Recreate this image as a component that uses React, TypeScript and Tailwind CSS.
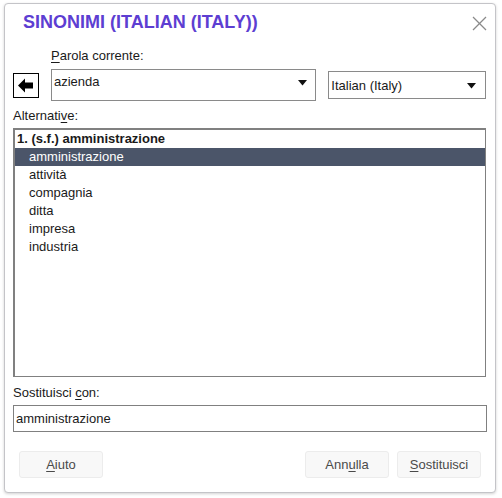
import React from "react";

const Tri = () => (
  <svg width="9" height="6" viewBox="0 0 9 6" className="shrink-0">
    <polygon points="0,0 9,0 4.5,5.5" fill="#111" />
  </svg>
);

export default function App() {
  const items = ["attività", "compagnia", "ditta", "impresa", "industria"];
  return (
    <div
      className="w-[502px] h-[498px] bg-white pt-[3px] pl-[4px] text-[13px] text-[#1a1a1a]"
      style={{ fontFamily: '"Liberation Sans", Arial, sans-serif' }}
    >
      <div className="w-[492px] h-[490px] border border-[#c4c4c8] rounded-[4px] shadow-[0_1px_3px_rgba(0,0,0,0.18)] bg-white flex flex-col pl-[8px] pr-[9px]">
        {/* title */}
        <div className="mt-[8px] h-[21px] flex items-center justify-between">
          <div className="ml-[10px] text-[18px] leading-[21px] font-bold text-[#5d3ed2]">
            SINONIMI (ITALIAN (ITALY))
          </div>
          <svg width="15" height="15" viewBox="0 0 15 15" className="mr-[-1px] mt-[1px]">
            <line x1="1" y1="1" x2="14" y2="14" stroke="#8a8a8a" strokeWidth="1.3" />
            <line x1="14" y1="1" x2="1" y2="14" stroke="#8a8a8a" strokeWidth="1.3" />
          </svg>
        </div>

        {/* label */}
        <div className="mt-[15px] ml-[38px] leading-[15px]">
          <span className="underline underline-offset-2">P</span>arola corrente:
        </div>

        {/* row */}
        <div className="mt-[6px] flex items-center h-[32px]">
          <div className="w-[26px] h-[25px] border border-black flex items-center justify-center">
            <svg width="16" height="15" viewBox="0 0 16 15">
              <polygon points="0,7.5 7,0.5 7,4.5 15,4.5 15,10.5 7,10.5 7,14.5" fill="#000" />
            </svg>
          </div>
          <div className="ml-[12px] w-[266px] h-[32px] border border-[#8a8a8a] flex items-start justify-between pl-[2px] pr-[8px]">
            <span className="mt-[4px] leading-[15px]">azienda</span>
            <span className="mt-[10px]"><Tri /></span>
          </div>
          <div className="ml-[12px] w-[158px] h-[28px] border border-[#8a8a8a] flex items-center justify-between pl-[2px] pr-[9px]">
            <span className="leading-[15px]">Italian (Italy)</span>
            <span className="mt-[2px]"><Tri /></span>
          </div>
        </div>

        {/* Alternative label */}
        <div className="mt-[7px] leading-[15px]">
          Alternati<span className="underline underline-offset-2">v</span>e:
        </div>

        {/* list */}
        <div className="mt-[5px] w-[473px] h-[249px] border-t-2 border-l-2 border-r border-b border-[#808080] bg-white">
          <div className="h-[18px] leading-[18px] pl-[2px] font-bold">1. (s.f.) amministrazione</div>
          <div className="h-[18px] leading-[18px] pl-[14px] bg-[#4b5569] text-white">amministrazione</div>
          {items.map((t) => (
            <div key={t} className="h-[18px] leading-[18px] pl-[14px]">
              {t}
            </div>
          ))}
        </div>

        {/* Sostituisci label */}
        <div className="mt-[8px] leading-[15px]">
          Sostituisci <span className="underline underline-offset-2">c</span>on:
        </div>

        {/* input */}
        <div className="mt-[5px] w-[474px] h-[27px] border border-[#808080] flex items-center pl-[2px]">
          <span className="leading-[15px]">amministrazione</span>
        </div>

        {/* buttons */}
        <div className="mt-[19px] flex items-center pl-[6px] pr-[5px]">
          <button className="w-[84px] h-[27px] rounded-[3px] border border-[#ececec] bg-[#f8f8f8] text-[#4a4a4a] text-[13px]">
            <span className="underline underline-offset-2">A</span>iuto
          </button>
          <div className="flex-1" />
          <button className="w-[84px] h-[27px] rounded-[3px] border border-[#ececec] bg-[#f8f8f8] text-[#4a4a4a] text-[13px]">
            Ann<span className="underline underline-offset-2">u</span>lla
          </button>
          <button className="ml-[8px] w-[84px] h-[27px] rounded-[3px] border border-[#ececec] bg-[#f8f8f8] text-[#4a4a4a] text-[13px]">
            <span className="underline underline-offset-2">S</span>ostituisci
          </button>
        </div>
      </div>
    </div>
  );
}
